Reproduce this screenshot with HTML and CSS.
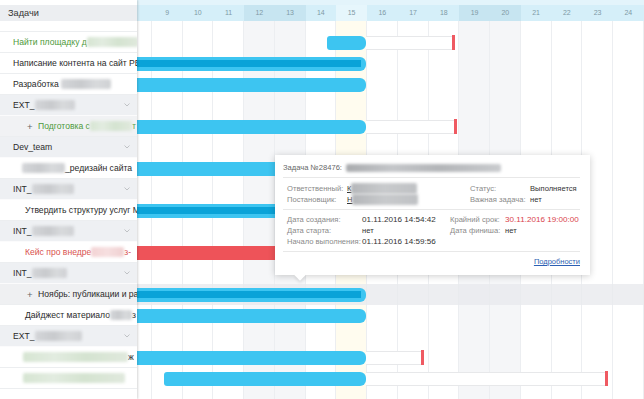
FILE: index.html
```html
<!DOCTYPE html>
<html lang="ru">
<head>
<meta charset="utf-8">
<title>Задачи — диаграмма Ганта</title>
<link rel="stylesheet" href="styles.css">
</head>
<body>
<div class="app">
  <aside class="side">
    <div class="side-top"></div>
    <div class="side-head">Задачи</div>
    <div class="side-gap"></div>

    <div class="srow green"><span>Найти площадку д</span><span class="blur bl-green" style="width:52px"></span></div>
    <div class="srow"><span>Написание контента на сайт РЕ</span></div>
    <div class="srow"><span>Разработка&nbsp;</span><span class="blur bl-gray" style="width:50px"></span></div>
    <div class="srow grp"><span class="gname"><span>EXT_</span><span class="blur bl-gray" style="width:40px"></span></span><svg class="chev" viewBox="0 0 6 4"><path d="M0.5 0.5 L3 3 L5.5 0.5" fill="none" stroke="#b9bcc0" stroke-width="0.9"/></svg></div>
    <div class="srow par green"><span class="plus">+</span><span>Подготовка с</span><span class="blur bl-green" style="width:42px"></span><span>т</span></div>
    <div class="srow grp"><span class="gname"><span>Dev_team</span></span><svg class="chev" viewBox="0 0 6 4"><path d="M0.5 0.5 L3 3 L5.5 0.5" fill="none" stroke="#b9bcc0" stroke-width="0.9"/></svg></div>
    <div class="srow sub2"><span class="blur bl-gray" style="width:43px"></span><span>_редизайн сайта</span></div>
    <div class="srow grp"><span class="gname"><span>INT_</span><span class="blur bl-gray" style="width:42px"></span></span><svg class="chev" viewBox="0 0 6 4"><path d="M0.5 0.5 L3 3 L5.5 0.5" fill="none" stroke="#b9bcc0" stroke-width="0.9"/></svg></div>
    <div class="srow sub"><span>Утвердить структуру услуг М</span></div>
    <div class="srow grp"><span class="gname"><span>INT_</span><span class="blur bl-gray" style="width:42px"></span></span><svg class="chev" viewBox="0 0 6 4"><path d="M0.5 0.5 L3 3 L5.5 0.5" fill="none" stroke="#b9bcc0" stroke-width="0.9"/></svg></div>
    <div class="srow sub red"><span>Кейс про внедре</span><span class="blur bl-red" style="width:33px"></span><span>з-</span></div>
    <div class="srow grp"><span class="gname"><span>INT_</span><span class="blur bl-gray" style="width:35px"></span></span><svg class="chev" viewBox="0 0 6 4"><path d="M0.5 0.5 L3 3 L5.5 0.5" fill="none" stroke="#b9bcc0" stroke-width="0.9"/></svg></div>
    <div class="srow par hl"><span class="plus">+</span><span>Ноябрь: публикации и ра</span></div>
    <div class="srow sub"><span>Дайджест материало</span><span class="blur bl-gray" style="width:22px"></span><span>з</span></div>
    <div class="srow grp"><span class="gname"><span>EXT_</span><span class="blur bl-gray" style="width:47px"></span></span><svg class="chev" viewBox="0 0 6 4"><path d="M0.5 0.5 L3 3 L5.5 0.5" fill="none" stroke="#b9bcc0" stroke-width="0.9"/></svg></div>
    <div class="srow sub3"><span class="blur bl-green" style="width:105px"></span><span>ж</span></div>
    <div class="srow sub3"><span class="blur bl-green" style="width:102px"></span></div>
  </aside>

  <main class="chart">
    <div class="chart-inner">
      <div class="chead-top"></div>
      <div class="chead">
        <div class="day"></div>
        <div class="day">9</div>
        <div class="day">10</div>
        <div class="day">11</div>
        <div class="day we">12</div>
        <div class="day we">13</div>
        <div class="day">14</div>
        <div class="day today">15</div>
        <div class="day">16</div>
        <div class="day">17</div>
        <div class="day">18</div>
        <div class="day we">19</div>
        <div class="day we">20</div>
        <div class="day">21</div>
        <div class="day">22</div>
        <div class="day">23</div>
        <div class="day">24</div>
      </div>
      <div class="cbody">
        <div class="cgap"></div>
        <div class="crow"><div class="bar start" style="margin-left:206px;width:39px"></div><div class="out" style="width:86px"></div><div class="deadline"></div></div>
        <div class="crow"><div class="bar" style="margin-left:6px;width:239px"><div class="prog"></div></div></div>
        <div class="crow"><div class="bar" style="margin-left:6px;width:239px"></div></div>
        <div class="crow"></div>
        <div class="crow"><div class="bar" style="margin-left:6px;width:239px"></div><div class="out" style="width:88px"></div><div class="deadline"></div></div>
        <div class="crow"></div>
        <div class="crow"><div class="bar" style="margin-left:6px;width:239px"></div></div>
        <div class="crow"></div>
        <div class="crow"><div class="bar" style="margin-left:6px;width:239px"><div class="prog"></div></div></div>
        <div class="crow"></div>
        <div class="crow"><div class="bar red" style="margin-left:6px;width:239px"></div></div>
        <div class="crow"></div>
        <div class="crow hl"><div class="bar" style="margin-left:6px;width:239px"><div class="prog"></div></div></div>
        <div class="crow"><div class="bar" style="margin-left:6px;width:239px"></div></div>
        <div class="crow"></div>
        <div class="crow"><div class="bar" style="margin-left:6px;width:239px"></div><div class="out" style="width:55px"></div><div class="deadline"></div></div>
        <div class="crow"><div class="bar start" style="margin-left:43px;width:202px"></div><div class="out" style="width:239px"></div><div class="deadline"></div></div>
      </div>
    </div>
  </main>

  <div class="tip">
    <div class="tt-title"><span>Задача №28476:</span><span class="blur bl-dark" style="width:155px"></span></div>
    <div class="tt-sec tt-a">
      <span>Ответственный:</span><span class="val"><span class="ul">К</span><span class="blur bl-dark2" style="width:66px"></span></span>
      <span>Статус:</span><span class="val">Выполняется</span>
      <span>Постановщик:</span><span class="val"><span class="ul">Н</span><span class="blur bl-dark2" style="width:66px"></span></span>
      <span>Важная задача:</span><span class="val">нет</span>
    </div>
    <div class="tt-sec tt-b">
      <span>Дата создания:</span><span class="val num">01.11.2016 14:54:42</span>
      <span>Крайний срок:</span><span class="val num due">30.11.2016 19:00:00</span>
      <span>Дата старта:</span><span class="val">нет</span>
      <span>Дата финиша:</span><span class="val">нет</span>
      <span>Начало выполнения:</span><span class="val num">01.11.2016 14:59:56</span>
      <span></span><span></span>
    </div>
    <div class="tt-foot"><a class="more" href="#">Подробности</a></div>
  </div>
</div>
</body>
</html>
```

FILE: styles.css
```css
* { box-sizing: border-box; margin: 0; padding: 0; }
html, body {
  width: 644px;
  height: 399px;
  overflow: hidden;
  background: #fff;
  font-family: "Liberation Sans", Arial, sans-serif;
}
.app {
  position: relative;
  display: flex;
  height: 399px;
}

/* ---------- left task list ---------- */
.side {
  width: 137px;
  flex: none;
  overflow: hidden;
  white-space: nowrap;
  background: #fff;
  box-shadow: 1px 0 2px rgba(0, 0, 0, 0.16);
  position: relative;
  z-index: 2;
}
.side-top { height: 5px; }
.side-head {
  height: 16px;
  line-height: 16px;
  background: #eceef1;
  color: #333;
  font-size: 9.2px;
  padding-left: 8px;
}
.side-gap {
  height: 11px;
  border-bottom: 1px solid #eceef0;
}
.srow {
  height: 21px;
  display: flex;
  align-items: center;
  padding-left: 13px;
  font-size: 8.6px;
  color: #2a2a2a;
  border-bottom: 1px solid #eceef0;
  overflow: hidden;
}
.srow > span, .gname > span { flex: none; }
.srow.grp {
  background: #eef0f3;
  border-bottom-color: #fbfbfc;
  justify-content: space-between;
  padding-right: 7px;
}
.gname { display: flex; align-items: center; }
.chev { width: 6px; height: 4px; flex: none; }
.srow.sub { padding-left: 25px; }
.srow.sub2 { padding-left: 22px; }
.srow.sub3 { padding-left: 23px; }
.srow.par { background: #f1f2f4; padding-left: 27px; }
.srow.hl { background: #eff0f2; }
.plus { width: 11px; color: #666; font-size: 9.5px; }
.green { color: #4e9a3c; }
.red { color: #d9534f; }

.blur {
  display: inline-block;
  height: 10px;
  border-radius: 2px;
  filter: blur(1.4px);
}
.bl-gray { background: linear-gradient(90deg, #d4d6d9, #c8cacd 40%, #d8dadc 70%, #cfd1d4); }
.bl-green { background: linear-gradient(90deg, #d6e5d2, #e2ece0 30%, #d4e3d0 60%, #e0e9dd); }
.bl-red { background: linear-gradient(90deg, #f3d3d4, #f6dfe0 50%, #f0cfd0); }
.bl-dark { background: linear-gradient(90deg, #a9abae, #c4c6c9 30%, #b3b5b8 60%, #c9cbce); height: 8px; margin-left: 4px; }
.bl-dark2 { background: linear-gradient(90deg, #b4b6b9, #c8cacc 50%, #bfc1c4); height: 11px; }

/* ---------- chart ---------- */
.chart {
  flex: 1;
  min-width: 0;
  overflow: hidden;
}
.chart-inner {
  margin-left: -16px;
  width: 523px;
}
.chead-top {
  height: 5px;
  background: #e3f4fb;
}
.chead {
  display: grid;
  grid-template-columns: repeat(17, 30.75px);
  height: 16px;
  background: #d5eff9;
}
.day {
  font-size: 7px;
  line-height: 16px;
  text-align: center;
  color: #7f9aa6;
}
.day.we { background: #c7e5f1; }
.day.today { background: #e6f6fc; }

.cbody {
  height: 378px;
  background:
    repeating-linear-gradient(90deg, transparent 0 29.75px, #eceef1 29.75px 30.75px),
    linear-gradient(90deg,
      transparent 0 123px,
      #f5f6f8 123px 184.5px,
      transparent 184.5px 215.25px,
      #fffcef 215.25px 246px,
      transparent 246px 338.25px,
      #f5f6f8 338.25px 399.75px,
      transparent 399.75px);
}
.cgap { height: 11px; }
.crow {
  height: 21px;
  display: flex;
  align-items: center;
}
.crow.hl { background: rgba(232, 234, 237, 0.8); }

.bar {
  flex: none;
  height: 14px;
  display: flex;
  align-items: center;
  background: #3dc5f1;
  border-radius: 0 6px 6px 0;
}
.bar.start { border-radius: 3px 6px 6px 3px; }
.bar.red { background: #ee5359; }
.prog {
  flex: 1;
  height: 7px;
  margin-right: 5px;
  background: #0aa3d8;
}
.out {
  flex: none;
  height: 14px;
  background: #fff;
  border: 1px solid #e7e8ea;
  border-left: none;
  border-right: none;
}
.deadline {
  flex: none;
  width: 3px;
  height: 15px;
  background: #ef5a62;
}

/* ---------- tooltip ---------- */
.tip {
  position: absolute;
  left: 275px;
  top: 155px;
  width: 315px;
  height: 120px;
  background: #fff;
  box-shadow: 0 1px 7px rgba(0, 0, 0, 0.2);
  padding: 0 10px 0 8px;
  font-size: 7.6px;
  color: #8a8a8a;
  z-index: 3;
}
.tip::after {
  content: "";
  position: absolute;
  left: 21px;
  bottom: -4px;
  width: 8px;
  height: 8px;
  background: #fff;
  transform: rotate(45deg);
  box-shadow: 2px 2px 3px rgba(0, 0, 0, 0.08);
}
.tt-title {
  display: flex;
  align-items: center;
  padding: 7px 0 4px;
  line-height: 11px;
  color: #666;
  border-bottom: 1px solid #e8e8e8;
  white-space: nowrap;
}
.tt-sec {
  display: grid;
  line-height: 11px;
  padding: 5px 4px 4px;
  border-bottom: 1px solid #e8e8e8;
  white-space: nowrap;
}
.tt-a { grid-template-columns: 60px 123px 60px 1fr; }
.tt-b { grid-template-columns: 75px 88px 55px 1fr; padding-top: 4px; }
.val { color: #333; display: flex; align-items: center; white-space: nowrap; }
.val.num { font-size: 8.1px; }
.ul { text-decoration: underline; }
.due { color: #d9434c; }
.tt-foot {
  padding-top: 4px;
  line-height: 11px;
  text-align: right;
}
.more {
  color: #2c5fb3;
  text-decoration: underline;
  font-size: 7.5px;
}
```
